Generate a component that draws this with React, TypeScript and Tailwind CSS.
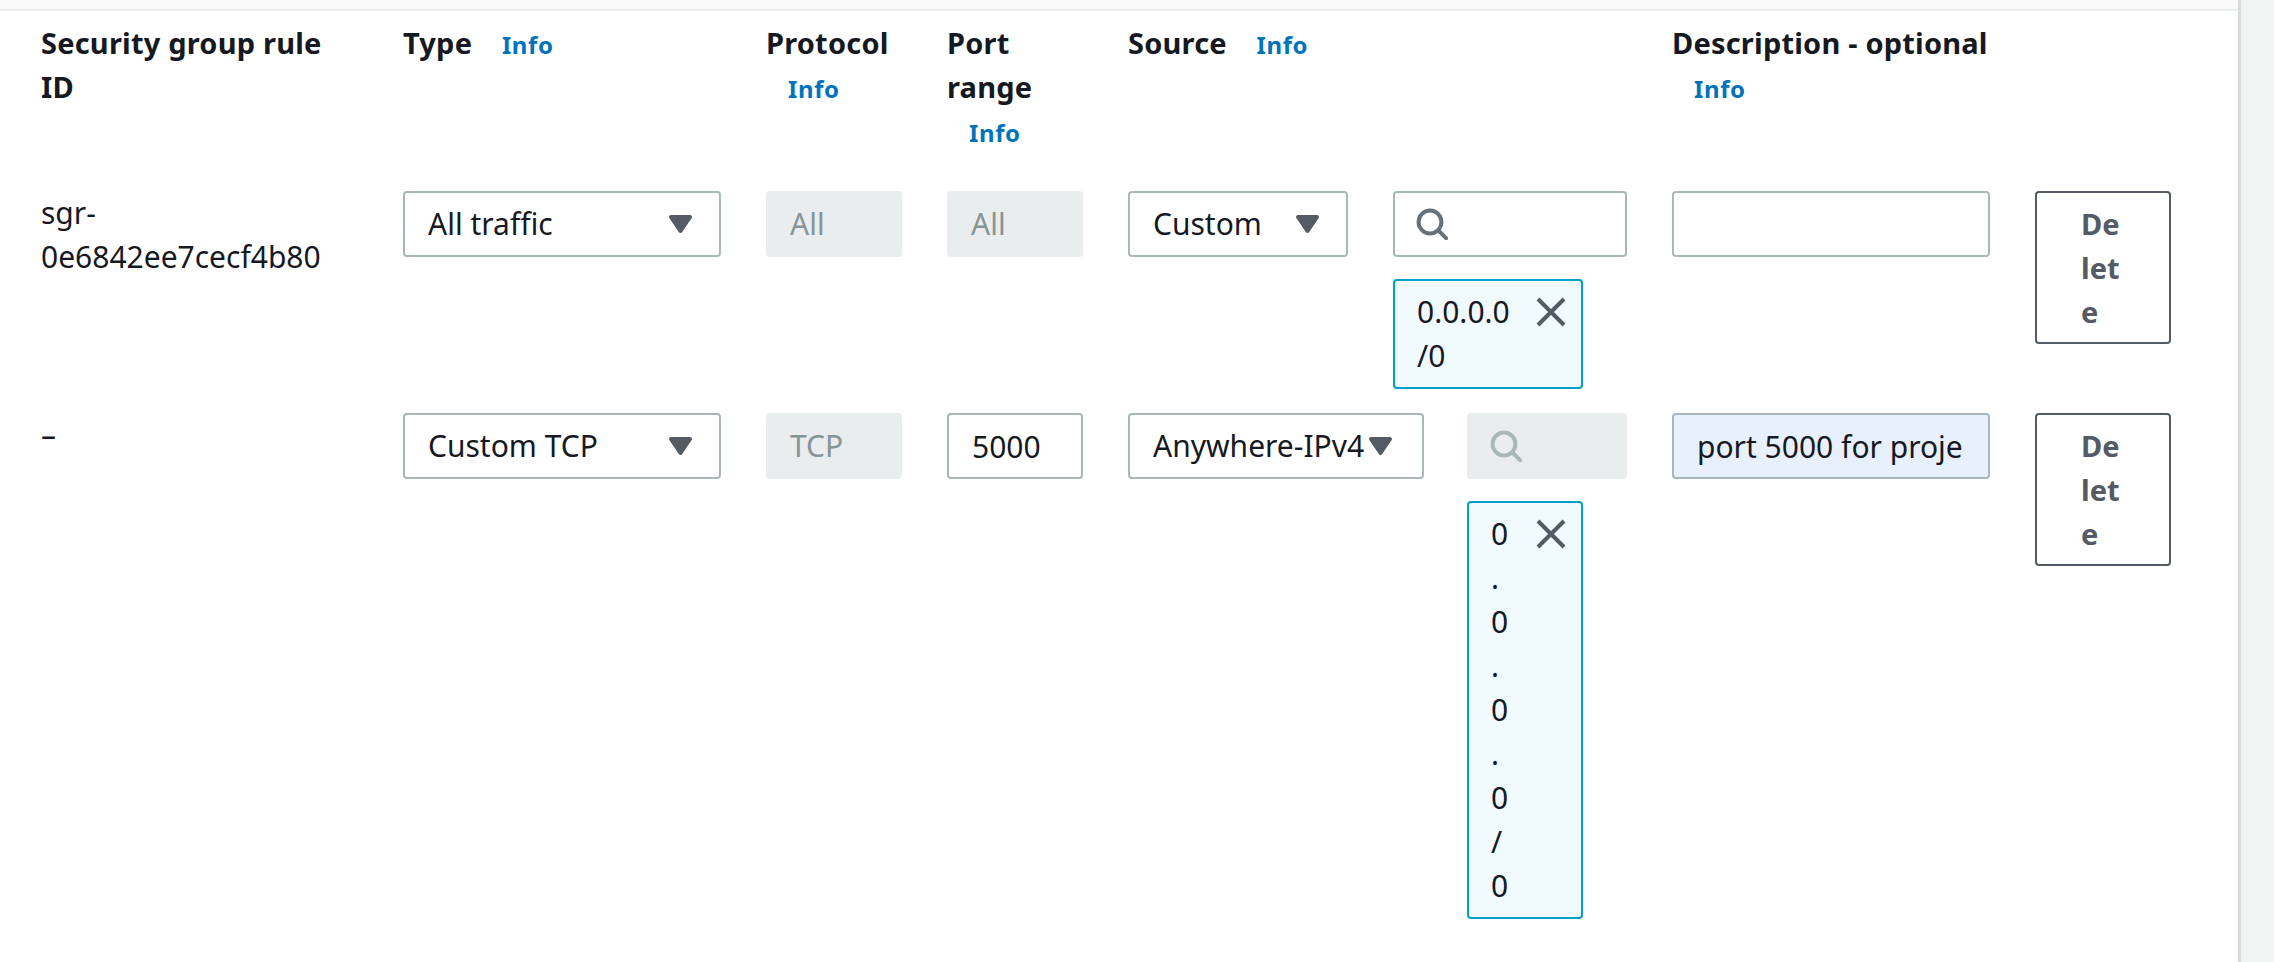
const Caret = () => (
  <svg viewBox="0 0 23 18" className="w-[23px] h-[18px] shrink-0 fill-[#545b64]">
    <path d="M2 0h19a2 2 0 0 1 1.7 3l-9.5 14a2 2 0 0 1-3.4 0L.3 3A2 2 0 0 1 2 0z" />
  </svg>
);

const SearchIcon = ({ disabled }: { disabled?: boolean }) => (
  <svg
    viewBox="0 0 16 16"
    fill="none"
    strokeWidth="2"
    className={`w-8 h-8 shrink-0 ${disabled ? 'stroke-[#aab7b8]' : 'stroke-[#687078]'}`}
  >
    <circle cx="7" cy="7" r="5.7" />
    <path d="M11 11l4.8 4.8" />
  </svg>
);

const CloseIcon = () => (
  <svg viewBox="0 0 16 16" fill="none" strokeWidth="2" className="w-8 h-8 shrink-0 stroke-[#545b64]">
    <path d="M1.5 1.5l13 13M14.5 1.5l-13 13" />
  </svg>
);

const Info = () => (
  <a className="ml-[22px] text-[24px] tracking-[0.6px] font-bold text-[#0073bb]">Info</a>
);

const HeaderCell = ({ title, info }: { title: string; info?: boolean }) => (
  <div className="font-bold text-[29px] tracking-[0.2px] text-[#16191f] pb-[12px]">
    {title}
    {info && (
      <>
        {' '}
        <Info />
      </>
    )}
  </div>
);

const Select = ({ label, width }: { label: string; width: string }) => (
  <div
    className={`flex items-center justify-between h-[66px] border-2 border-[#aab7b8] rounded bg-white pl-[23px] pr-[27px] ${width}`}
  >
    <span className="whitespace-nowrap">{label}</span>
    <Caret />
  </div>
);

const DisabledField = ({ label }: { label: string }) => (
  <div className="flex items-center h-[66px] rounded bg-[#eaeded] text-[#879596] px-6">{label}</div>
);

const TextField = ({ value, filled }: { value?: string; filled?: boolean }) => (
  <input
    readOnly
    value={value ?? ''}
    className={`block w-full h-[66px] border-2 border-[#aab7b8] rounded pl-[23px] pr-[18px] outline-none text-[#16191f] ${
      filled ? 'bg-[#e8f0fe]' : 'bg-white'
    }`}
  />
);

const Search = ({ disabled }: { disabled?: boolean }) => (
  <div
    className={`flex items-center w-full h-[66px] rounded ${
      disabled ? 'bg-[#eaeded] px-[23px]' : 'border-2 border-[#aab7b8] bg-white px-[21px]'
    }`}
  >
    <SearchIcon disabled={disabled} />
  </div>
);

const Chip = ({ text, width }: { text: string; width: string }) => (
  <div
    className={`flex mt-[22px] border-2 border-[#00a1c9] rounded bg-[#f1faff] pl-[22px] pr-[14px] pt-[9px] pb-[9px] ${width}`}
  >
    <span className="flex-1 min-w-0 break-words mr-6">{text}</span>
    <span className="h-11 flex items-center">
      <CloseIcon />
    </span>
  </div>
);

const DeleteButton = () => (
  <div>
    <button className="block w-[136px] border-2 border-[#545b64] rounded bg-white pl-[44px] pr-[44px] pt-[9px] pb-2 font-bold text-[29px] text-[#545b64] text-left break-words">
      Delete
    </button>
  </div>
);

export default function App() {
  return (
    <div className="flex w-[2274px] h-[962px] overflow-hidden bg-white text-[#16191f] text-[30px] leading-[44px] font-['Noto_Sans',sans-serif]">
      <div className="flex-1 min-w-0">
        <div className="h-[11px] bg-[#fafafa] border-b-2 border-[#eaeded]" />
        <div className="pt-[10px] pl-[41px] grid grid-cols-[317px_318px_136px_136px_499px_318px_136px] gap-x-[45px] gap-y-[24px] items-start">
          <HeaderCell title="Security group rule ID" />
          <HeaderCell title="Type" info />
          <HeaderCell title="Protocol" info />
          <HeaderCell title="Port range" info />
          <HeaderCell title="Source" info />
          <HeaderCell title="Description - optional" info />
          <div />

          <div>sgr-0e6842ee7cecf4b80</div>
          <Select label="All traffic" width="w-full" />
          <DisabledField label="All" />
          <DisabledField label="All" />
          <div className="flex gap-[45px]">
            <Select label="Custom" width="w-[220px]" />
            <div className="w-[234px]">
              <Search />
              <Chip text="0.0.0.0/0" width="w-[190px]" />
            </div>
          </div>
          <TextField />
          <DeleteButton />

          <div>–</div>
          <Select label="Custom TCP" width="w-full" />
          <DisabledField label="TCP" />
          <TextField value="5000" />
          <div className="flex gap-[43px]">
            <div>
              <div className="w-[296px] flex items-center h-[66px] border-2 border-[#aab7b8] rounded bg-white pl-[23px]">
                <span className="whitespace-nowrap">Anywhere-IPv4</span>
                <span className="ml-[5px]">
                  <Caret />
                </span>
              </div>
            </div>
            <div className="w-[160px]">
              <Search disabled />
              <Chip text="0.0.0.0/0" width="w-[116px]" />
            </div>
          </div>
          <TextField value="port 5000 for proje" filled />
          <DeleteButton />
        </div>
      </div>
      <div className="w-9 bg-[#f2f3f3] border-l-[3px] border-[#d5dbdb]" />
    </div>
  );
}
